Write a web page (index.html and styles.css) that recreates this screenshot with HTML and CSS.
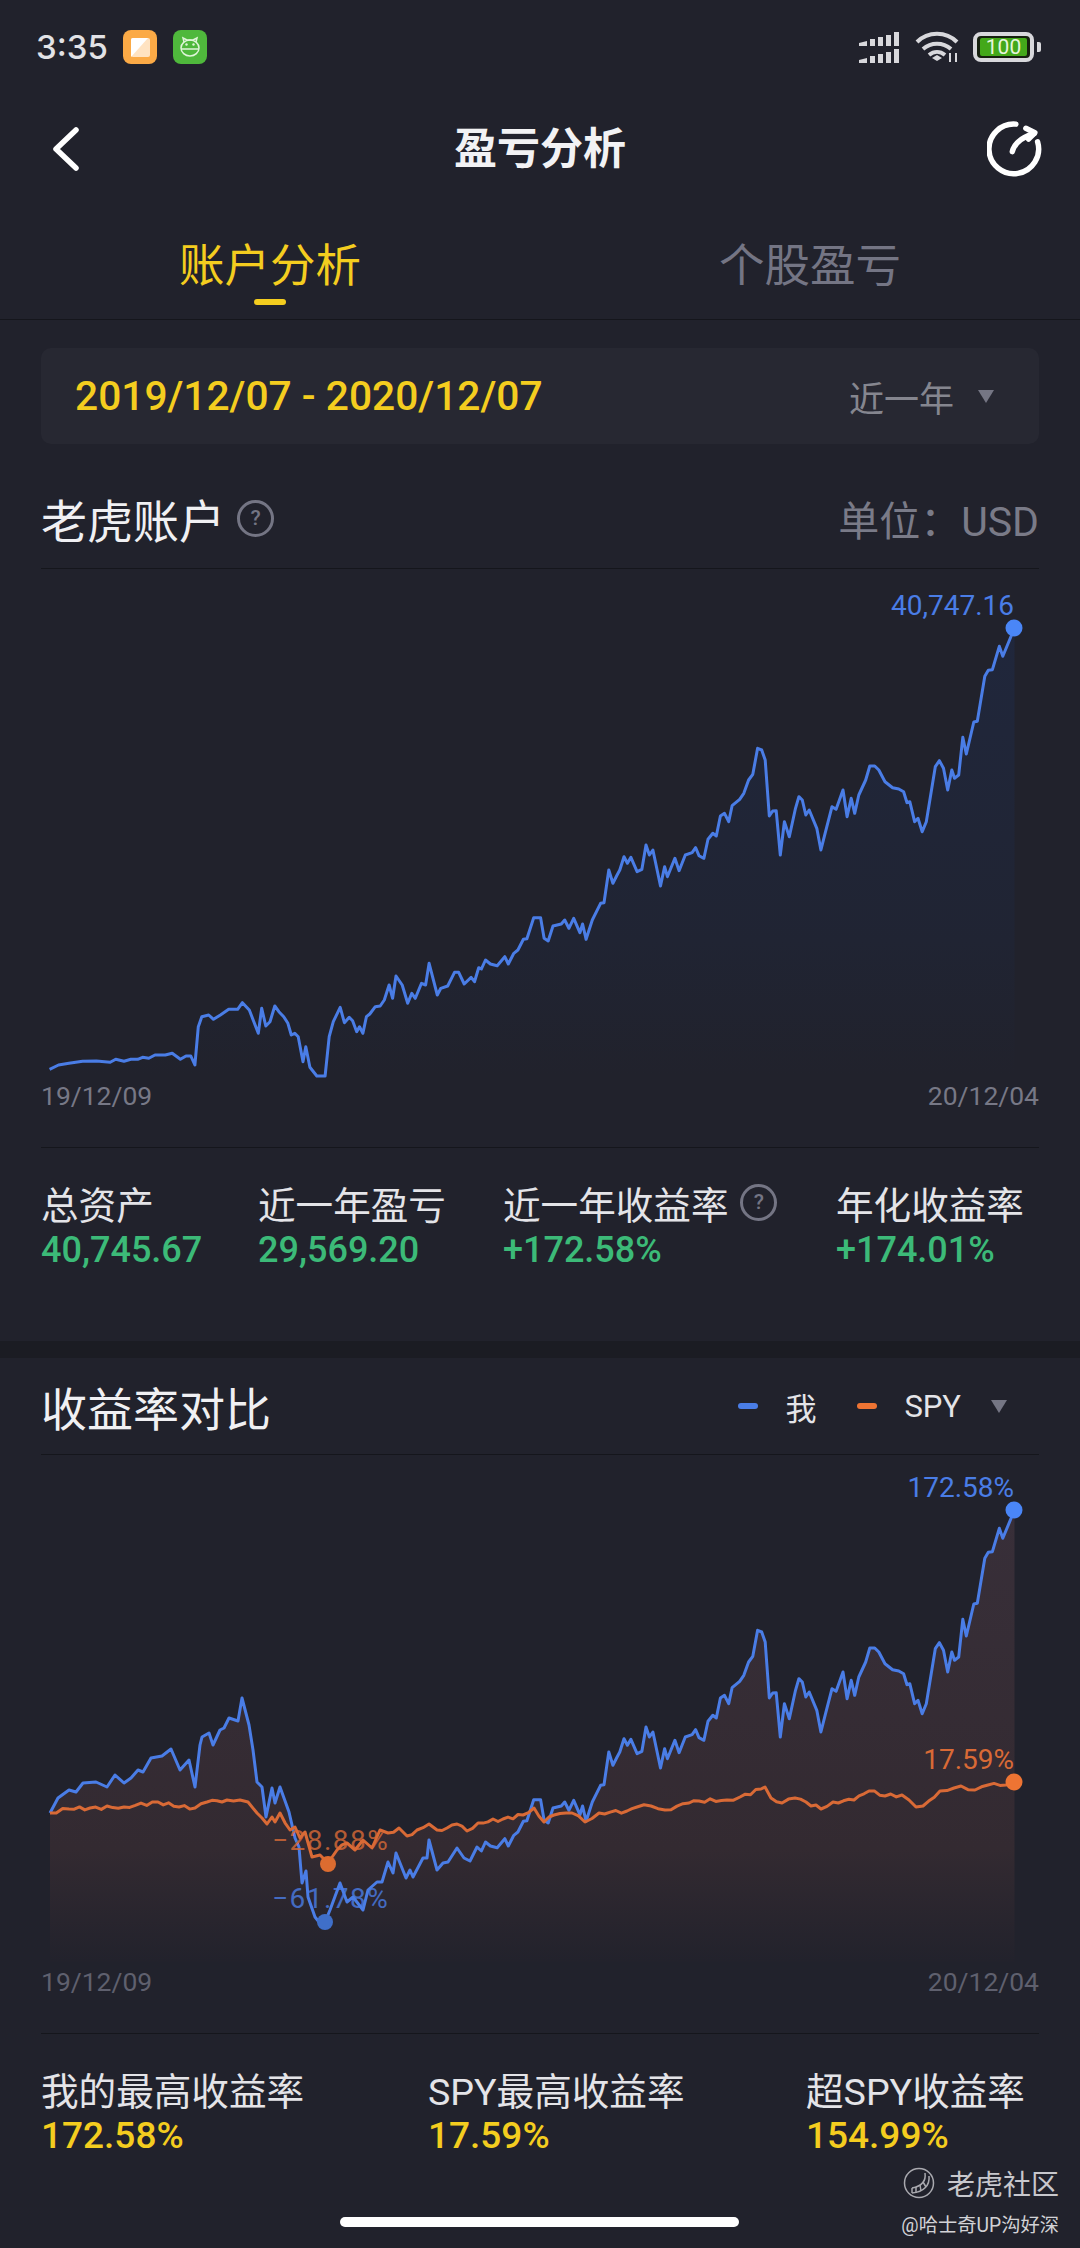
FILE: index.html
```html
<!DOCTYPE html>
<html lang="zh-CN">
<head>
    <meta charset="UTF-8" />
    <title>盈亏分析</title>
    <link rel="stylesheet" href="styles.css">
</head>
<body>
    <div class="screen">
        <div class="status-bar">
            <div class="status-left">
                <span class="clock">3:35</span>
                <svg class="app-icon" viewBox="0 0 34 34">
                    <rect width="34" height="34" rx="8" fill="#fbaa46" />
                    <rect x="8" y="8" width="19" height="19" rx="2" fill="#ffe3c2" />
                    <path d="M8 10a2 2 0 0 1 2-2h15L8 27z" fill="#fff" />
                </svg>
                <svg class="app-icon" viewBox="0 0 34 34">
                    <rect width="34" height="34" rx="8" fill="#4fb83c" />
                    <g fill="none" stroke="#dff5d8" stroke-width="1.5">
                        <path d="M11 12l-1-4 4 2h6l4-2-1 4" />
                        <ellipse cx="17" cy="18" rx="9" ry="8" />
                        <path d="M8 19h18" />
                    </g>
                    <circle cx="13.5" cy="14.5" r="1.2" fill="#dff5d8" />
                    <circle cx="20.5" cy="14.5" r="1.2" fill="#dff5d8" />
                </svg>
            </div>
            <div class="status-right">
                <svg class="signal" viewBox="0 0 40 31" fill="#d8d8dc">
                    <path d="M0 11l8-2v5H0zM11 7h5v7h-5zM19 5h5v9h-5zM27 3h5v11h-5zM35 0h5v14h-5z" />
                    <path d="M0 28l8-2v5H0zM11 24h5v7h-5zM19 22h5v9h-5zM27 20h5v11h-5zM35 17h5v14h-5z" />
                </svg>
                <svg class="wifi" viewBox="0 0 44 32" fill="none" stroke="#d8d8dc" stroke-width="4">
                    <path d="M2 11c11-11 29-11 40 0" />
                    <path d="M8 18c8-7 20-7 28 0" />
                    <path d="M14 24c5-4 11-4 16 0" />
                    <path d="M17 27l5-3 5 3-5 3z" fill="#d8d8dc" stroke="none" />
                    <path d="M35 22v9M41 22v9" stroke-width="2" />
                </svg>
                <div class="battery">
                    <div class="battery-body"><span>100</span></div>
                    <div class="battery-nub"></div>
                </div>
            </div>
        </div>

        <div class="nav-bar">
            <svg class="nav-back" viewBox="0 0 28 46" fill="none" stroke="#fff" stroke-width="5.5" stroke-linecap="round" stroke-linejoin="round">
                <path d="M24 4L4 23l20 19" />
            </svg>
            <h1>盈亏分析</h1>
            <svg class="nav-share" viewBox="0 0 62 62" fill="none" stroke="#fff" stroke-width="6" stroke-linecap="round" stroke-linejoin="round">
                <path d="M32 3.5A27.5 27.5 0 1 0 56 23" />
                <path d="M28 34c2-9 11-16 24-20" />
                <path d="M43 8l10 5-7 7" />
            </svg>
        </div>

        <div class="tabs">
            <div class="tab active">账户分析</div>
            <div class="tab">个股盈亏</div>
        </div>

        <div class="date-bar">
            <span class="date-range">2019/12/07 - 2020/12/07</span>
            <span class="period">近一年<i class="caret"></i></span>
        </div>

        <section class="panel">
            <div class="panel-head first">
                <h2>老虎账户<span class="help">?</span></h2>
                <span class="unit">单位：USD</span>
            </div>
            <svg id="chartAccount" class="chart" viewBox="0 569 1080 506">
                <defs>
                    <linearGradient id="fillAccount" gradientUnits="userSpaceOnUse" x1="0" y1="628" x2="0" y2="1075">
                        <stop offset="0" stop-color="#20273c" />
                        <stop offset="0.7" stop-color="#202433" />
                        <stop offset="1" stop-color="#21222c" />
                    </linearGradient>
                </defs>
                <polygon id="areaAccount" fill="url(#fillAccount)" />
                <polyline id="lineAccount" class="line line-blue" />
                <text class="point-label label-blue" x="1014" y="615" text-anchor="end">40,747.16</text>
                <circle class="dot-blue" cx="1014" cy="628" r="8.5" />
            </svg>
            <div class="axis"><span>19/12/09</span><span>20/12/04</span></div>
            <div class="stats stats-four">
                <div class="stat"><div class="stat-label">总资产</div><div class="stat-value up">40,745.67</div></div>
                <div class="stat"><div class="stat-label">近一年盈亏</div><div class="stat-value up">29,569.20</div></div>
                <div class="stat"><div class="stat-label">近一年收益率<span class="help">?</span></div><div class="stat-value up">+172.58%</div></div>
                <div class="stat"><div class="stat-label">年化收益率</div><div class="stat-value up">+174.01%</div></div>
            </div>
        </section>

        <div class="band"></div>

        <section class="panel">
            <div class="panel-head">
                <h2>收益率对比</h2>
                <div class="legend">
                    <i class="dash dash-blue"></i><span class="legend-name">我</span>
                    <i class="dash dash-orange"></i><span class="legend-name">SPY</span>
                    <i class="caret"></i>
                </div>
            </div>
            <svg id="chartCompare" class="chart" viewBox="0 1455 1080 506">
                <defs>
                    <linearGradient id="fillCompare" gradientUnits="userSpaceOnUse" x1="0" y1="1510" x2="0" y2="1962">
                        <stop offset="0" stop-color="#382f39" />
                        <stop offset="0.75" stop-color="#332a31" />
                        <stop offset="1" stop-color="#22222c" />
                    </linearGradient>
                </defs>
                <polygon id="areaMine" fill="url(#fillCompare)" />
                <polygon id="areaSpy" fill="url(#fillCompare)" />
                <polyline id="lineMine" class="line line-blue" />
                <polyline id="lineSpy" class="line line-orange" />
                <text class="point-label label-blue" x="1014" y="1497" text-anchor="end">172.58%</text>
                <text class="point-label label-orange" x="1014" y="1769" text-anchor="end">17.59%</text>
                <text class="point-label label-orange dim" x="272" y="1850">−28.88%</text>
                <text class="point-label label-blue dim" x="272" y="1908">−61.78%</text>
                <circle class="dot-blue" cx="1014" cy="1510" r="8.5" />
                <circle class="dot-orange" cx="1014" cy="1782" r="8.5" />
                <circle class="dot-orange low" cx="328" cy="1864" r="8" />
                <circle class="dot-blue low" cx="325" cy="1922" r="8" />
            </svg>
            <div class="axis dim"><span>19/12/09</span><span>20/12/04</span></div>
            <div class="stats stats-three">
                <div class="stat"><div class="stat-label">我的最高收益率</div><div class="stat-value gold">172.58%</div></div>
                <div class="stat"><div class="stat-label">SPY最高收益率</div><div class="stat-value gold">17.59%</div></div>
                <div class="stat"><div class="stat-label">超SPY收益率</div><div class="stat-value gold">154.99%</div></div>
            </div>
        </section>

        <!-- marca d'agua -->
        <div class="watermark">
            <div class="watermark-brand">
                <svg viewBox="0 0 32 32" fill="none" stroke="#a9a9af">
                    <circle cx="16" cy="16" r="14.5" stroke-width="1.5" />
                    <path d="M22 6c1 7-2 13-13 15M26 9c1 9-5 16-17 17" stroke-width="1.5" />
                    <path d="M9 21v5M13 20v6M17 18l1 6M20 15l3 5" stroke-width="1.5" />
                </svg>
                <span>老虎社区</span>
            </div>
            <div class="watermark-user">@哈士奇UP沟好深</div>
        </div>

        <div class="home-bar"></div>
    </div>

    <script src="chart.js"></script>
</body>
</html>
```

FILE: styles.css
```css
:root {
    --bg: #21222c;
    --band: #1b1c23;
    --card: #272832;
    --rule: #15161c;
    --white: #f0f0f3;
    --label: #e4e4e8;
    --gray: #747584;
    --gold: #f4cd1f;
    --green: #3cba78;
    --blue: #4a7de6;
    --orange: #d96a36;
}

* {
    box-sizing: border-box;
    margin: 0;
    padding: 0;
}

body {
    background: var(--bg);
    color: var(--white);
    font-family: Roboto, "Noto Sans CJK SC", sans-serif;
}

.screen {
    position: relative;
    width: 1080px;
    height: 2248px;
    overflow: hidden;
}

/* Barra de status */
.status-bar {
    display: flex;
    justify-content: space-between;
    align-items: center;
    height: 98px;
    padding: 0 39px 4px 36px;
}

.status-left,
.status-right {
    display: flex;
    align-items: center;
}

.clock {
    width: 87px;
    font-family: Inter, sans-serif;
    font-size: 33px;
    font-weight: 500;
    color: #e2e2e6;
}

.app-icon {
    width: 34px;
    height: 34px;
    margin-right: 16px;
}

.signal {
    width: 40px;
    height: 31px;
    margin-right: 16px;
}

.wifi {
    width: 44px;
    height: 32px;
    margin-right: 14px;
}

.battery {
    display: flex;
    align-items: center;
    gap: 3px;
}

.battery-body {
    display: flex;
    justify-content: center;
    align-items: center;
    width: 61px;
    height: 30px;
    border: 4px solid #d8d8dc;
    border-radius: 8px;
    background: #16200f;
}

.battery-body span {
    width: 47px;
    height: 18px;
    background: #43a81a;
    border-radius: 2px;
    color: #e6f5dc;
    font-size: 21px;
    line-height: 18px;
    text-align: center;
}

.battery-nub {
    width: 4px;
    height: 10px;
    background: #d8d8dc;
    border-radius: 0 2px 2px 0;
}

/* Navegacao */
.nav-bar {
    display: grid;
    grid-template-columns: 1fr auto 1fr;
    align-items: center;
    height: 102px;
    padding: 0 37px 0 52px;
}

.nav-bar h1 {
    font-size: 43px;
    font-weight: 700;
    color: #f2f2f4;
    line-height: 1;
    margin-left: -15px;
}

.nav-back {
    width: 28px;
    height: 46px;
}

.nav-share {
    justify-self: end;
    width: 56px;
    height: 56px;
}

.tabs {
    display: flex;
    height: 120px;
    border-bottom: 1px solid var(--rule);
}

.tab {
    position: relative;
    flex: 1;
    padding-top: 39px;
    font-size: 45.5px;
    line-height: 56px;
    text-align: center;
    color: var(--gray);
}

.tab.active {
    color: var(--gold);
}

.tab.active::after {
    content: "";
    position: absolute;
    left: 254px;
    top: 99px;
    width: 32px;
    height: 6px;
    border-radius: 3px;
    background: var(--gold);
}

.date-bar {
    display: flex;
    justify-content: space-between;
    align-items: center;
    height: 96px;
    margin: 28px 41px 0;
    padding: 0 45px 0 34px;
    border-radius: 10px;
    background: var(--card);
}

.date-range {
    font-size: 40.7px;
    font-weight: 500;
    color: var(--gold);
}

.period {
    display: flex;
    align-items: center;
    gap: 24px;
    font-size: 35px;
    color: #85868f;
}

.caret {
    display: block;
    width: 0;
    height: 0;
    border-left: 8px solid transparent;
    border-right: 8px solid transparent;
    border-top: 13px solid #757684;
}

.panel-head {
    display: flex;
    justify-content: space-between;
    align-items: center;
    height: 97px;
    margin: 0 41px;
    border-bottom: 1px solid var(--rule);
}

.panel-head.first {
    height: 125px;
    padding-top: 24px;
}

.panel-head h2 {
    display: flex;
    align-items: center;
    font-size: 46px;
    font-weight: 400;
}

.help {
    display: inline-flex;
    justify-content: center;
    align-items: center;
    width: 37px;
    height: 37px;
    margin-left: 12px;
    border: 3px solid var(--gray);
    border-radius: 50%;
    color: var(--gray);
    font-size: 21px;
    font-weight: 500;
}

.stat-label .help {
    margin-left: 12px;
}

.unit {
    font-size: 41px;
    color: #7a7b88;
}

.legend {
    display: flex;
    align-items: center;
    padding-right: 32px;
    font-size: 31px;
    color: #e4e4e8;
}

.dash {
    display: block;
    width: 20px;
    height: 6px;
    border-radius: 3px;
}

.dash-blue {
    background: var(--blue);
}

.dash-orange {
    background: #ee7433;
}

.legend-name {
    margin: 0 41px 0 27px;
}

.legend-name:nth-of-type(2) {
    margin-right: 30px;
}

.chart {
    display: block;
    width: 1080px;
    height: 506px;
    overflow: visible;
}

.line {
    fill: none;
    stroke-width: 3;
    stroke-linejoin: round;
}

.line-blue {
    stroke: var(--blue);
}

.line-orange {
    stroke: var(--orange);
}

.point-label {
    font-family: Roboto, sans-serif;
    font-size: 28px;
}

.label-blue {
    fill: var(--blue);
}

.label-orange {
    fill: var(--orange);
}

.point-label.dim {
    letter-spacing: 1.5px;
    opacity: 0.8;
}

.dot-blue {
    fill: #4a86f7;
}

.dot-orange {
    fill: #ee7433;
}

.dot-blue.low {
    fill: #3f6fc9;
}

.dot-orange.low {
    fill: #dc6c30;
}

.axis {
    display: flex;
    justify-content: space-between;
    align-items: center;
    height: 40px;
    margin: 0 41px;
    font-size: 26.5px;
    color: #777886;
}

.axis.dim {
    color: #5f606e;
}

.stats {
    display: grid;
    margin: 32px 41px 0;
    padding: 32px 0 65px;
    border-top: 1px solid var(--rule);
}

.stats-four {
    grid-template-columns: 217px 245px 333px auto;
}

.stats-three {
    grid-template-columns: 387px 378px auto;
    padding-bottom: 0;
}

.stat-label {
    display: flex;
    align-items: center;
    height: 44px;
    font-size: 37.6px;
    color: var(--label);
    white-space: nowrap;
}

.stat-value {
    font-size: 36px;
    line-height: 52px;
    font-weight: 500;
}

.gold {
    font-size: 37px;
    color: var(--gold);
}

.up {
    color: var(--green);
}

.band {
    height: 17px;
    background: var(--band);
}

.watermark {
    position: absolute;
    right: 21px;
    top: 2165px;
    text-align: right;
}

.watermark-brand {
    display: flex;
    justify-content: flex-end;
    align-items: center;
    gap: 12px;
    height: 36px;
    font-size: 28px;
    color: #c8c8cd;
}

.watermark-brand svg {
    width: 32px;
    height: 32px;
}

.watermark-user {
    margin-top: 9px;
    font-size: 19.3px;
    color: #d2d2d6;
}

.home-bar {
    position: absolute;
    left: 340px;
    top: 2217px;
    width: 399px;
    height: 10px;
    border-radius: 5px;
    background: #fff;
}
```

FILE: chart.js
```js
// amostras da conta, em unidades brutas (convertidas em toPage)
const rawAccount = [
    [72,988],[85,975],[100,970],[120,964],[140,963],[160,967],[168,958],[180,964],[190,958],[200,958],
    [207,952],[216,955],[225,945],[240,945],[250,940],[262,958],[270,948],[277,948],[283,975],[288,860],
    [293,830],[303,825],[310,838],[320,825],[332,808],[345,808],[352,788],[362,810],[375,880],[380,805],
    [386,858],[392,845],[399,798],[405,815],[412,830],[418,850],[423,885],[428,880],[433,890],[440,965],
    [444,920],[450,982],[460,1008],[472,1008],[478,890],[484,845],[494,802],[500,848],[507,832],[512,842],
    [518,875],[522,860],[527,880],[532,830],[537,822],[545,800],[552,798],[558,780],[565,735],[570,775],
    [575,708],[584,735],[592,790],[598,760],[603,775],[612,730],[618,735],[623,670],[635,765],[640,745],
    [650,738],[660,697],[666,697],[674,732],[684,712],[689,725],[695,683],[699,687],[705,660],[712,672],
    [722,677],[733,650],[738,672],[746,640],[752,630],[760,598],[765,596],[775,533],[785,533],[790,595],
    [796,603],[803,558],[815,552],[820,540],[826,565],[833,535],[842,578],[846,552],[851,598],[860,540],
    [872,490],[877,488],[884,390],[890,430],[896,405],[900,390],[906,350],[911,370],[916,352],[925,395],
    [932,388],[938,315],[943,345],[948,330],[959,438],[965,380],[969,410],[980,355],[986,392],[995,345],
    [1005,338],[1010,323],[1015,347],[1022,355],[1028,298],[1035,280],[1040,288],[1046,228],[1052,220],[1058,245],
    [1063,197],[1074,178],[1080,160],[1087,120],[1093,103],[1100,25],[1106,30],[1111,60],[1117,228],[1122,213],
    [1127,212],[1133,345],[1139,245],[1146,290],[1155,205],[1160,170],[1165,180],[1170,225],[1175,210],[1186,265],
    [1192,330],[1198,280],[1208,200],[1214,208],[1224,150],[1230,230],[1236,175],[1241,220],[1247,165],[1257,120],
    [1263,78],[1270,78],[1276,90],[1285,125],[1296,143],[1305,147],[1312,155],[1317,188],[1321,185],[1328,245],
    [1333,235],[1339,275],[1345,245],[1358,80],[1364,62],[1370,85],[1376,150],[1382,90],[1386,115],[1392,105],
    [1398,-8],[1403,42],[1414,-54],[1419,-56],[1430,-191],[1435,-209],[1441,-211],[1451,-281],[1456,-251],[1473,-336]
];

// a curva de retorno antes de 480px, ja em pixels da pagina
const mineStart = [
    [50,1813],[58,1798],[69,1790],[76,1792],[83,1783],[96,1782],[107,1787],[115,1775],[124,1783],[131,1778],
    [138,1770],[143,1772],[151,1758],[162,1756],[171,1749],[180,1770],[189,1760],[195,1787],[200,1745],[202,1737],
    [209,1733],[213,1745],[220,1730],[224,1728],[229,1718],[238,1721],[242,1698],[249,1725],[253,1750],[257,1782],
    [262,1787],[266,1817],[272,1788],[275,1803],[280,1787],[289,1812],[295,1838],[299,1847],[302,1883],[306,1871],
    [308,1897],[315,1917],[323,1927],[330,1910],[340,1883],[347,1902],[353,1897],[363,1910],[368,1890],[377,1882],
    [382,1882],[388,1862],[393,1873],[396,1853],[406,1878],[410,1870],[413,1877],[423,1858],[427,1858],[429,1840],
    [437,1870],[443,1863],[448,1862],[457,1848],[464,1858],[470,1861],[477,1847]
];

const spy = [
    [50,1813],[69,1809],[90,1808],[124,1807],[158,1802],[179,1807],[195,1808],[207,1802],[227,1800],[240,1800],
    [248,1802],[257,1813],[267,1824],[272,1817],[275,1822],[280,1813],[290,1830],[295,1827],[300,1838],[305,1832],
    [312,1857],[320,1855],[328,1863],[337,1850],[347,1843],[355,1850],[363,1840],[372,1848],[380,1830],[388,1833],
    [399,1828],[407,1836],[417,1830],[429,1824],[437,1830],[447,1828],[457,1824],[467,1831],[478,1823],[503,1819],
    [523,1815],[534,1808],[544,1822],[554,1815],[572,1813],[585,1822],[599,1813],[627,1811],[637,1807],[651,1806],
    [665,1810],[689,1803],[699,1801],[727,1800],[740,1797],[761,1789],[765,1787],[771,1798],[782,1803],[795,1798],
    [806,1802],[821,1809],[833,1802],[854,1800],[869,1791],[885,1796],[902,1795],[916,1807],[923,1806],[940,1791],
    [954,1788],[961,1786],[975,1790],[988,1785],[1006,1785],[1014,1782]
];

function toPage(list) {
    return list.map(([x, y]) => [x / 1.452, 740 + y / 3]);
}

function toAttr(points) {
    return points.map(p => p[0].toFixed(1) + ',' + p[1].toFixed(1)).join(' ');
}

// o SPY tem oscilacao diaria pequena entre as amostras
function addNoise(points) {
    const out = [];
    for (let i = 0; i < points.length - 1; i++) {
        const [x0, y0] = points[i];
        const [x1, y1] = points[i + 1];
        const steps = Math.max(1, Math.floor((x1 - x0) / 5));
        for (let s = 0; s < steps; s++) {
            const t = s / steps;
            const wiggle = s === 0 ? 0 : Math.sin(out.length * 2.3) * 1.8;
            out.push([x0 + (x1 - x0) * t, y0 + (y1 - y0) * t + wiggle]);
        }
    }
    out.push(points[points.length - 1]);
    return out;
}

function draw(lineId, areaId, points, bottom) {
    const first = points[0];
    const last = points[points.length - 1];
    document.getElementById(lineId).setAttribute('points', toAttr(points));
    document.getElementById(areaId).setAttribute(
        'points',
        toAttr(points) + ' ' + last[0].toFixed(1) + ',' + bottom + ' ' + first[0].toFixed(1) + ',' + bottom
    );
}

const account = toPage(rawAccount);

// depois de 480px as duas curvas azuis tem a mesma forma
const mineTail = account.filter(p => p[0] > 480).map(p => [p[0], p[1] + 882]);

draw('lineAccount', 'areaAccount', account, 1076);
draw('lineMine', 'areaMine', mineStart.concat(mineTail), 1962);
draw('lineSpy', 'areaSpy', addNoise(spy), 1962);
```
